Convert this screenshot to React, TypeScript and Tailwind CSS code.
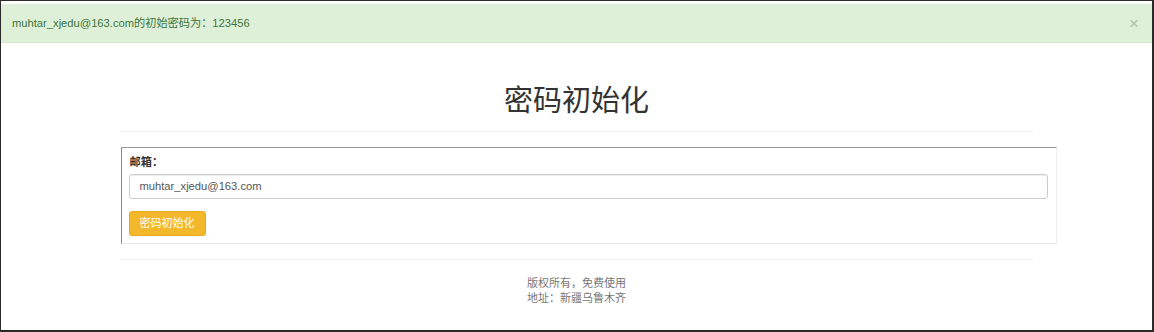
import React from "react";

export default function App() {
  const font = { fontFamily: '"Liberation Sans", "Noto Sans CJK SC", sans-serif' };
  return (
    <div
      className="w-[1154px] h-[332px] overflow-hidden bg-white border-t border-l border-r-2 border-b-2 border-[#2a2a2a] text-[11.2px] text-[#333]"
      style={font}
    >
      <div className="pt-[3px]">
        <div className="h-[39px] bg-[#dff0d8] border-b border-[#d6e9c6] text-[#3c763d] flex items-center justify-between pl-[11px] pr-[13px]">
          <span>muhtar_xjedu@163.com的初始密码为：123456</span>
          <span className="text-[17px] font-normal text-black opacity-20 leading-none">×</span>
        </div>
      </div>

      <div className="w-[912px] mx-auto">
        <h1 className="text-center text-[29px] leading-[32px] mt-[42px] mb-[14px] text-[#333] font-normal">
          密码初始化
        </h1>
        <div className="h-px bg-[#eee]" />

        <div className="w-[936px] mt-[15px] border-t border-l border-t-[#999] border-l-[#888] border-r border-b border-r-[#eee] border-b-[#e8e8e8] pl-[7px] pr-[8px] pt-[6px] pb-[7px]">
          <div className="font-bold leading-[16px] mb-[4px] ml-[1px]">邮箱：</div>
          <div className="h-[25px] border border-[#ccc] rounded-[3px] flex items-center pl-[10px] text-[#555] shadow-[inset_0_1px_1px_rgba(0,0,0,0.075)]">
            muhtar_xjedu@163.com
          </div>
          <button className="mt-[12px] h-[25px] px-[10px] bg-[#f2b72a] border border-[#eaa91b] rounded-[3px] text-white text-[11px]">
            密码初始化
          </button>
        </div>

        <div className="h-px bg-[#eee] mt-[15px]" />
        <div className="text-center text-[#777] text-[11px] leading-[15px] mt-[16px]">
          <div>版权所有，免费使用</div>
          <div>地址：新疆乌鲁木齐</div>
        </div>
      </div>
    </div>
  );
}
